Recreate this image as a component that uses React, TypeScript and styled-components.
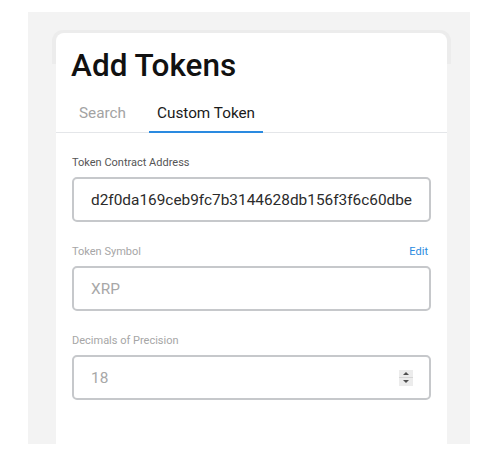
import styled, { createGlobalStyle } from "styled-components";

const GlobalStyle = createGlobalStyle`
  html, body {
    margin: 0;
    padding: 0;
    background: #ffffff;
    font-family: Roboto, "Liberation Sans", Arial, sans-serif;
  }
  * {
    box-sizing: border-box;
  }
`;

const Page = styled.div`
  width: 489px;
  height: 469px;
  padding: 12px 19px 25px 28px;
`;

const Panel = styled.div`
  height: 100%;
  isolation: isolate;
  background-color: #f3f3f3;
  padding: 21px 24px 0 28px;
  display: flex;
`;

const Card = styled.div`
  position: relative;
  flex: 1;
  background-color: #ffffff;
  border-radius: 8px 8px 0 0;
  display: flex;
  flex-direction: column;
  &::before {
    content: "";
    position: absolute;
    top: -3px;
    left: -4px;
    right: -4px;
    height: 34px;
    border-radius: 11px 11px 0 0;
    background-color: #ececec;
    z-index: -1;
  }
`;

const Title = styled.h1`
  margin: 0;
  padding: 15px 15px 0;
  font-size: 31.5px;
  line-height: 36px;
  font-weight: 500;
  color: #111111;
`;

const TabBar = styled.div`
  display: flex;
  gap: 15px;
  padding: 0 15px;
  margin-top: 20px;
  border-bottom: 1px solid #e4e6e9;
`;

const Tab = styled.div<{ active?: boolean }>`
  padding: 0 8px 9px;
  font-size: 15.3px;
  line-height: 18px;
  color: ${(p) => (p.active ? "#1a1a1a" : "#a3a3a3")};
  border-bottom: 2px solid ${(p) => (p.active ? "#2a8ae0" : "transparent")};
  margin-bottom: -1px;
`;

const Form = styled.div`
  display: flex;
  flex-direction: column;
  gap: 23px;
  padding: 23px 16px 0;
`;

const Field = styled.div`
  display: flex;
  flex-direction: column;
  gap: 7px;
`;

const LabelRow = styled.div`
  display: flex;
  justify-content: space-between;
  align-items: center;
  padding-right: 3px;
`;

const Label = styled.label<{ muted?: boolean }>`
  font-size: 11px;
  line-height: 14px;
  color: ${(p) => (p.muted ? "#a6a6a6" : "#555555")};
`;

const EditLink = styled.span`
  font-size: 11px;
  line-height: 14px;
  color: #2a8ae0;
`;

const InputBox = styled.div`
  display: flex;
  align-items: center;
  width: 359px;
  height: 45px;
  border: 2px solid #c6c8cb;
  border-radius: 5px;
  padding: 0 17px;
  overflow: hidden;
`;

const Value = styled.span<{ muted?: boolean }>`
  flex: 1;
  font-size: 15.4px;
  line-height: 20px;
  white-space: nowrap;
  overflow: hidden;
  color: ${(p) => (p.muted ? "#a8a8a8" : "#2b2b2b")};
`;

const Spinner = styled.div`
  display: flex;
  flex-direction: column;
  width: 14px;
  height: 16px;
  margin-right: -1px;
  background-color: #ececec;
`;

const SpinHalf = styled.div<{ down?: boolean }>`
  flex: 1;
  display: flex;
  align-items: center;
  justify-content: center;
  border-top: ${(p) => (p.down ? "1px solid #d6d6d6" : "none")};
  &::after {
    content: "";
    width: 0;
    height: 0;
    border-left: 3px solid transparent;
    border-right: 3px solid transparent;
    ${(p) =>
      p.down
        ? "border-top: 3px solid #505050;"
        : "border-bottom: 3px solid #505050;"}
  }
`;

export default function App() {
  return (
    <>
      <GlobalStyle />
      <Page>
        <Panel>
          <Card>
            <Title>Add Tokens</Title>
            <TabBar>
              <Tab>Search</Tab>
              <Tab active>Custom Token</Tab>
            </TabBar>
            <Form>
              <Field>
                <Label>Token Contract Address</Label>
                <InputBox>
                  <Value>d2f0da169ceb9fc7b3144628db156f3f6c60dbe8</Value>
                </InputBox>
              </Field>
              <Field>
                <LabelRow>
                  <Label muted>Token Symbol</Label>
                  <EditLink>Edit</EditLink>
                </LabelRow>
                <InputBox>
                  <Value muted>XRP</Value>
                </InputBox>
              </Field>
              <Field>
                <Label muted>Decimals of Precision</Label>
                <InputBox>
                  <Value muted>18</Value>
                  <Spinner>
                    <SpinHalf />
                    <SpinHalf down />
                  </Spinner>
                </InputBox>
              </Field>
            </Form>
          </Card>
        </Panel>
      </Page>
    </>
  );
}
